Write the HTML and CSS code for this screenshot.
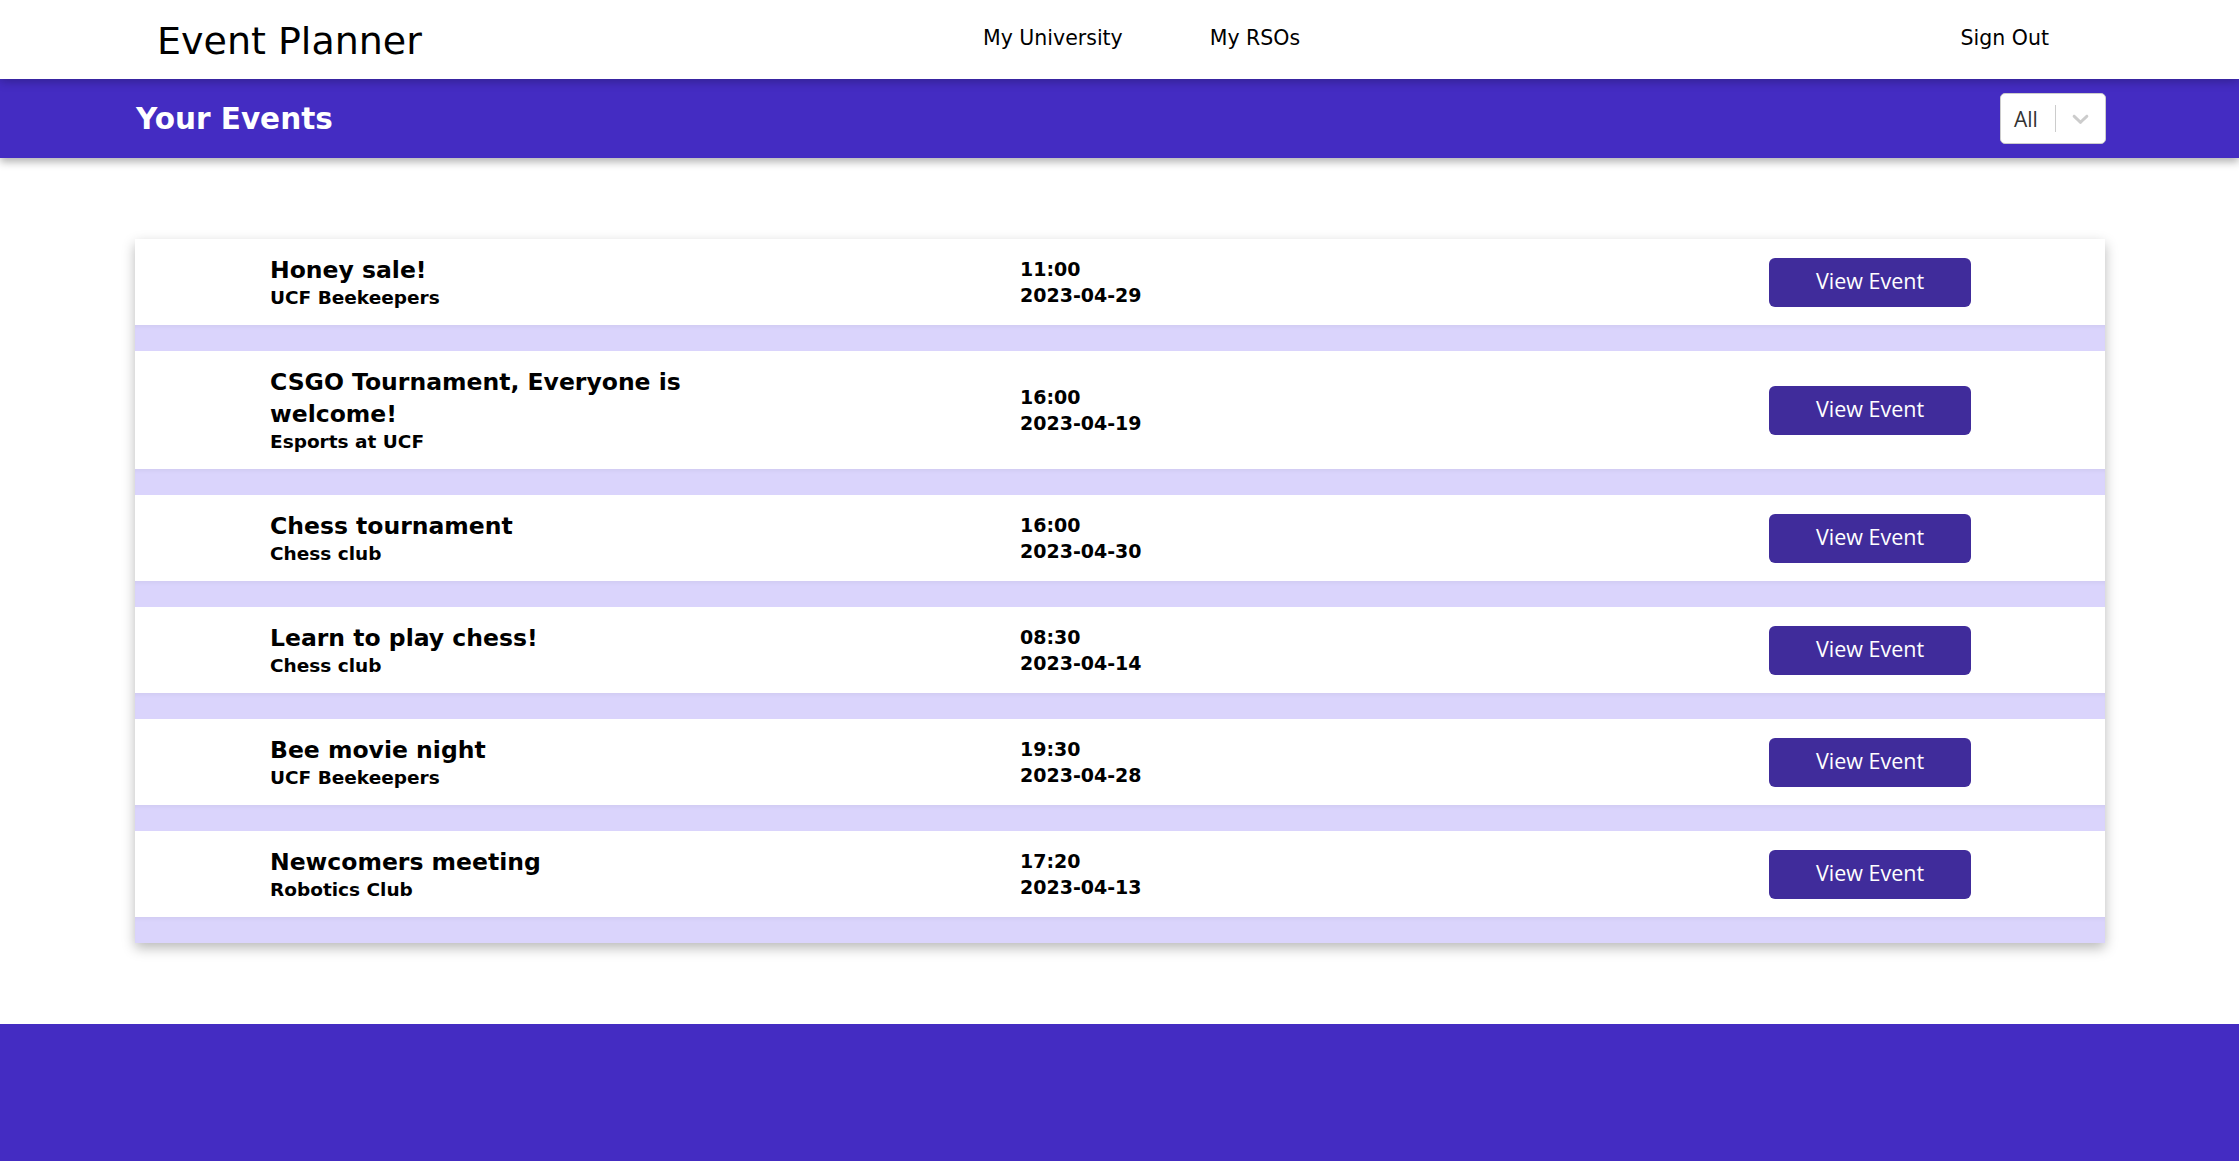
FILE: index.html
```html
<!DOCTYPE html>
<html lang="en">
<head>
<meta charset="utf-8">
<title>Event Planner</title>
<link rel="stylesheet" href="styles.css">
</head>
<body>
<nav class="navbar">
  <div class="brand">Event Planner</div>
  <div class="nav-links">
    <a class="nav-link" href="#">My University</a>
    <a class="nav-link" href="#">My RSOs</a>
  </div>
  <div class="nav-spacer"></div>
  <a class="nav-link" href="#">Sign Out</a>
</nav>

<header class="page-header">
  <h1 class="page-title">Your Events</h1>
  <div class="select">
    <span class="select-value">All</span>
    <span class="select-sep"></span>
    <span class="select-indicator">
      <svg viewBox="0 0 20 20" width="27" height="27" aria-hidden="true"><path d="M4.516 7.548c0.436-0.446 1.043-0.481 1.576 0l3.908 3.747 3.908-3.747c0.533-0.481 1.141-0.446 1.574 0 0.436 0.445 0.408 1.197 0 1.615-0.406 0.418-4.695 4.502-4.695 4.502-0.217 0.223-0.502 0.335-0.787 0.335s-0.57-0.112-0.789-0.335c0 0-4.287-4.084-4.695-4.502s-0.436-1.170 0-1.615z" fill="#cccccc"/></svg>
    </span>
  </div>
</header>

<main class="events">
  <div class="event">
    <div class="event-info">
      <div class="event-title">Honey sale!</div>
      <div class="event-org">UCF Beekeepers</div>
    </div>
    <div class="event-when"><div>11:00</div><div>2023-04-29</div></div>
    <button class="view-btn">View Event</button>
  </div>
  <div class="strip"></div>

  <div class="event">
    <div class="event-info">
      <div class="event-title">CSGO Tournament, Everyone is welcome!</div>
      <div class="event-org">Esports at UCF</div>
    </div>
    <div class="event-when"><div>16:00</div><div>2023-04-19</div></div>
    <button class="view-btn">View Event</button>
  </div>
  <div class="strip"></div>

  <div class="event">
    <div class="event-info">
      <div class="event-title">Chess tournament</div>
      <div class="event-org">Chess club</div>
    </div>
    <div class="event-when"><div>16:00</div><div>2023-04-30</div></div>
    <button class="view-btn">View Event</button>
  </div>
  <div class="strip"></div>

  <div class="event">
    <div class="event-info">
      <div class="event-title">Learn to play chess!</div>
      <div class="event-org">Chess club</div>
    </div>
    <div class="event-when"><div>08:30</div><div>2023-04-14</div></div>
    <button class="view-btn">View Event</button>
  </div>
  <div class="strip"></div>

  <div class="event">
    <div class="event-info">
      <div class="event-title">Bee movie night</div>
      <div class="event-org">UCF Beekeepers</div>
    </div>
    <div class="event-when"><div>19:30</div><div>2023-04-28</div></div>
    <button class="view-btn">View Event</button>
  </div>
  <div class="strip"></div>

  <div class="event">
    <div class="event-info">
      <div class="event-title">Newcomers meeting</div>
      <div class="event-org">Robotics Club</div>
    </div>
    <div class="event-when"><div>17:20</div><div>2023-04-13</div></div>
    <button class="view-btn">View Event</button>
  </div>
  <div class="strip"></div>
</main>

<footer class="footer"></footer>
</body>
</html>
```

FILE: styles.css
```css
html, body {
  margin: 0;
  padding: 0;
  background: #ffffff;
}

body {
  font-family: "DejaVu Sans", "Liberation Sans", sans-serif;
  color: #000;
}

.navbar {
  position: relative;
  z-index: 3;
  height: 79px;
  display: grid;
  grid-template-columns: 826px auto 1fr auto;
  align-items: center;
  padding: 0 190px 0 157px;
  background: #ffffff;
  box-shadow: 0 2px 10px rgba(0, 0, 0, 0.28);
}

.brand {
  font-size: 38px;
  line-height: 1;
  padding-top: 2px;
  color: #000;
}

.nav-links {
  display: flex;
  gap: 87px;
}

.nav-link {
  font-size: 20.5px;
  color: #000;
  text-decoration: none;
  padding-bottom: 3px;
}

.page-header {
  position: relative;
  z-index: 2;
  height: 79px;
  display: flex;
  align-items: center;
  justify-content: space-between;
  padding: 0 133px 0 136px;
  background: #442cc2;
  box-shadow: 0 4px 8px rgba(0, 0, 0, 0.3);
}

.page-title {
  margin: 0;
  font-size: 29.5px;
  font-weight: bold;
  color: #ffffff;
}

.select {
  width: 106px;
  height: 51px;
  box-sizing: border-box;
  display: flex;
  align-items: center;
  background: #ffffff;
  border: 1px solid #cccccc;
  border-radius: 5px;
}

.select-value {
  font-family: "Open Sans", "Noto Sans", sans-serif;
  font-size: 21px;
  color: #333333;
  padding-left: 13px;
  flex: 1;
}

.select-sep {
  width: 1px;
  align-self: stretch;
  margin: 11px 0;
  background: #cccccc;
}

.select-indicator {
  width: 49px;
  display: flex;
  align-items: center;
  justify-content: center;
}

.select-indicator svg {
  display: block;
}

.events {
  margin: 81px 134px 81px 135px;
  box-shadow: 0 5px 12px rgba(0, 0, 0, 0.28);
}

.event {
  display: grid;
  grid-template-columns: 750px 1fr auto;
  align-items: center;
  padding: 15px 134px 15px 135px;
  background: #ffffff;
}

.event-info {
  max-width: 500px;
}

.event-title {
  font-size: 23.5px;
  line-height: 32px;
  font-weight: bold;
}

.event-org {
  font-size: 18.5px;
  line-height: 24px;
  font-weight: bold;
}

.event-when {
  font-size: 19px;
  line-height: 26px;
  font-weight: bold;
}

.view-btn {
  width: 202px;
  height: 49px;
  border: none;
  border-radius: 6px;
  background: #402c9b;
  color: #ffffff;
  font-family: "Open Sans", "Noto Sans", sans-serif;
  font-size: 21.5px;
  padding: 0 0 3px 0;
}

.strip {
  height: 26px;
  background: #dad4fc;
  box-shadow: inset 0 4px 5px -3px rgba(0, 0, 0, 0.06);
}

.footer {
  height: 137px;
  background: #442cc2;
}
```
